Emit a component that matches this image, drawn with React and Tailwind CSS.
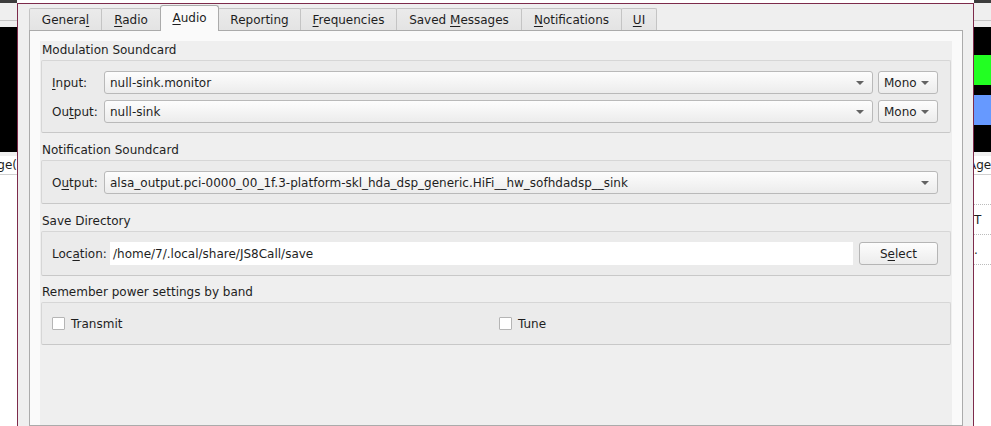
import React from "react";

const U = ({ children }) => <span className="underline underline-offset-2">{children}</span>;

function Arrow({ className = "" }) {
  return (
    <svg width="8" height="4" viewBox="0 0 8 4" className={"shrink-0 " + className}>
      <path d="M0 0 L8 0 L4 4 Z" fill="#636363" />
    </svg>
  );
}

function Combo({ children, className = "" }) {
  return (
    <div
      className={
        "h-[23px] flex items-center justify-between rounded-[3px] border border-[#b9b9b9] bg-gradient-to-b from-[#fdfdfd] to-[#ececec] pl-[5px] pr-[8px] text-[#1e1e1e] " +
        className
      }
    >
      <span className="whitespace-nowrap">{children}</span>
      <Arrow />
    </div>
  );
}

function Group({ title, children, titleH, boxClass }) {
  return (
    <div className="flex flex-col">
      <div className={"flex items-end pl-[2px] pb-[4px] text-[#1e1e1e] " + titleH}>{title}</div>
      <div className={"ml-[1px] w-[910px] rounded-[2px] border border-[#d6d6d6] border-b-[#c8c8c8] bg-[#ebebeb] " + boxClass}>
        {children}
      </div>
    </div>
  );
}

function Tab({ w, children, selected }) {
  if (selected)
    return (
      <div
        className={`relative z-10 h-[26px] ${w} shrink-0 rounded-t-[3px] border border-b-0 border-[#ababab] bg-[#fafafa] flex items-center justify-center text-[#1e1e1e] pb-[2px]`}
      >
        <span className="whitespace-pre">{children}</span>
      </div>
    );
  return (
    <div
      className={`h-[23px] ${w} shrink-0 -ml-px first:ml-0 rounded-t-[2px] border border-b-0 border-[#c4c4c4] bg-gradient-to-b from-[#ebebeb] to-[#e3e3e3] flex items-center justify-center text-[#1e1e1e]`}
    >
      <span className="whitespace-pre">{children}</span>
    </div>
  );
}

function Checkbox({ label }) {
  return (
    <div className="flex items-center gap-[6px]">
      <div className="w-[13px] h-[13px] border border-[#b5b5b5] bg-white rounded-[1px]" />
      <span className="text-[#1e1e1e]">{label}</span>
    </div>
  );
}

export default function App() {
  return (
    <div
      className="w-[991px] h-[426px] overflow-hidden flex bg-white text-[12px] leading-none"
      style={{ fontFamily: "'DejaVu Sans', sans-serif" }}
    >
      {/* left background app */}
      <div className="w-[17px] shrink-0 flex flex-col">
        <div className="h-[3px] bg-[#3d3d3d]" />
        <div className="h-[17px] bg-[#efefef]" />
        <div className="h-px bg-[#c6c6c6]" />
        <div className="h-[6px] bg-[#efefef]" />
        <div className="h-[125px] bg-black" />
        <div className="h-[4px] bg-[#efefef]" />
        <div className="h-[19px] bg-white border-b border-[#d0d0d0] flex items-center justify-end overflow-hidden text-[#1e1e1e] whitespace-nowrap">
          ge(
        </div>
        <div className="flex-1 bg-white" />
      </div>

      {/* dialog */}
      <div className="mt-[3px] w-[957px] shrink-0 border-l border-t border-r border-[#7d2b4b] bg-[#efefef] flex flex-col">
        <div className="flex items-end ml-[11px] mt-[1px] h-[26px]">
          <Tab w="w-[73px]">Genera<U>l</U></Tab>
          <Tab w="w-[60px]"><U>R</U>adio</Tab>
          <Tab w="w-[59px] -ml-px" selected><U>A</U>udio</Tab>
          <Tab w="w-[83px]">Reporting</Tab>
          <Tab w="w-[97px]"><U>F</U>requencies</Tab>
          <Tab w="w-[126px]">Saved <U>M</U>essages</Tab>
          <Tab w="w-[101px]"><U>N</U>otifications</Tab>
          <Tab w="w-[36px]"><U>U</U>I</Tab>
        </div>
        <div className="-mt-px ml-[11px] w-[934px] flex-1 border border-[#ababab] bg-[#fafafa] pt-[10px] px-[10px]">
          <div className="h-full bg-[#efefef] flex flex-col">
            <Group title="Modulation Soundcard" titleH="h-[19px]" boxClass="h-[73px] pt-[10px] pl-[10px] pr-[11px] flex flex-col gap-[6px]">
              <div className="flex items-center">
                <span className="w-[52px] text-[#1e1e1e]"><U>I</U>nput:</span>
                <Combo className="w-[769px]">null-sink.monitor</Combo>
                <Combo className="ml-[5px] w-[60px]">Mono</Combo>
              </div>
              <div className="flex items-center">
                <span className="w-[52px] text-[#1e1e1e]">Ou<U>t</U>put:</span>
                <Combo className="w-[769px]">null-sink</Combo>
                <Combo className="ml-[5px] w-[60px]">Mono</Combo>
              </div>
            </Group>
            <Group title="Notification Soundcard" titleH="h-[27px]" boxClass="h-[44px] pt-[10px] pl-[10px] pr-[11px]">
              <div className="flex items-center">
                <span className="w-[52px] text-[#1e1e1e]">O<U>u</U>tput:</span>
                <Combo className="w-[834px]">alsa_output.pci-0000_00_1f.3-platform-skl_hda_dsp_generic.HiFi__hw_sofhdadsp__sink</Combo>
              </div>
            </Group>
            <Group title="Save Directory" titleH="h-[27px]" boxClass="h-[45px] pt-[10px] pl-[10px] pr-[11px]">
              <div className="flex items-center">
                <span className="w-[58px] text-[#1e1e1e] whitespace-nowrap">Loc<U>a</U>tion:</span>
                <div className="w-[743px] h-[23px] bg-white flex items-center pl-[3px] text-[#1e1e1e]">
                  /home/7/.local/share/JS8Call/save
                </div>
                <div className="ml-[6px] w-[79px] h-[23px] rounded-[3px] border border-[#b5b5b5] bg-gradient-to-b from-[#fdfdfd] to-[#ececec] flex items-center justify-center text-[#1e1e1e]">
                  <span>S<U>e</U>lect</span>
                </div>
              </div>
            </Group>
            <Group title="Remember power settings by band" titleH="h-[26px]" boxClass="h-[43px] pl-[10px] flex items-center">
              <div className="w-[447px]">
                <Checkbox label="Transmit" />
              </div>
              <Checkbox label="Tune" />
            </Group>
            <div className="flex-1" />
          </div>
        </div>
      </div>

      {/* right background app */}
      <div className="flex-1 flex flex-col">
        <div className="h-[3px] bg-[#3d3d3d]" />
        <div className="h-[17px] bg-[#efefef]" />
        <div className="h-px bg-[#c6c6c6]" />
        <div className="h-[6px] bg-[#efefef]" />
        <div className="h-[28px] bg-black" />
        <div className="h-[30px] bg-[#22ff22]" />
        <div className="h-[10px] bg-black" />
        <div className="h-[30px] bg-[#6699ff]" />
        <div className="h-[27px] bg-black" />
        <div className="h-[4px] bg-[#efefef]" />
        <div className="h-[19px] bg-white border-b border-[#d0d0d0] flex items-center overflow-hidden text-[#1e1e1e] whitespace-nowrap">
          <span className="-ml-[6px]">Age</span>
        </div>
        <div className="h-[30px] bg-white border-b border-dotted border-[#bbbbbb]" />
        <div className="h-[30px] bg-white border-b border-dotted border-[#bbbbbb] flex items-center text-[#1e1e1e]">T</div>
        <div className="h-[30px] bg-white border-b border-dotted border-[#bbbbbb] flex items-center text-[#1e1e1e]">.</div>
        <div className="flex-1 bg-white" />
      </div>
    </div>
  );
}
